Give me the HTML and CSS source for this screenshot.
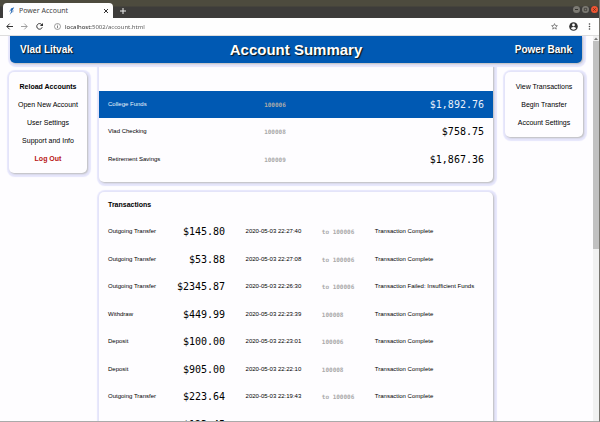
FILE: index.html
```html
<!DOCTYPE html>
<html lang="en">
<head>
<meta charset="utf-8">
<title>Power Account</title>
<link rel="stylesheet" href="styles.css">
</head>
<body>
<div class="window">
  <div class="titlebar">
    <div class="tab">
      <svg class="favicon" viewBox="0 0 8 10"><path d="M7 0 2.6 1.8 1.8 5 3.3 4.8 1 10 5.2 5.4 4 5.2Z" fill="#2468b4"/><path d="M2.2 3 .6 6.2M6 4 5 7" stroke="#6b8fc0" stroke-width=".7"/></svg>
      <span class="tab-title">Power Account</span>
      <button class="icon-button" aria-label="Close tab"><svg width="6" height="6" viewBox="0 0 6 6"><path d="m1 1 4 4M5 1 1 5" stroke="#333" stroke-width="1"/></svg></button>
    </div>
    <button class="icon-button new-tab" aria-label="New tab"><svg width="6" height="6" viewBox="0 0 6 6"><path d="M3 0v6M0 3h6" stroke="#eee" stroke-width="1"/></svg></button>
    <div class="controls">
      <button class="control" aria-label="Minimize"><svg viewBox="0 0 7 7"><path d="M2 3.5h3" stroke="#35342f"/></svg></button>
      <button class="control" aria-label="Maximize"><svg viewBox="0 0 7 7"><path d="M2.3 2.3h2.4v2.4H2.3z" fill="none" stroke="#35342f" stroke-width=".7"/></svg></button>
      <button class="control control-close" aria-label="Close"><svg viewBox="0 0 7 7"><path d="m2.2 2.2 2.6 2.6m0-2.6L2.2 4.8" stroke="#692817" stroke-width=".8"/></svg></button>
    </div>
  </div>
  <div class="toolbar">
    <button class="icon-button" aria-label="Back"><svg width="7" height="7" viewBox="0 0 7 7"><path d="M7 3.5H1M3.7.6.8 3.5l2.9 2.9" fill="none" stroke="#333" stroke-width="1"/></svg></button>
    <button class="icon-button" aria-label="Forward"><svg width="7" height="7" viewBox="0 0 7 7"><path d="M0 3.5h6M3.3.6l2.9 2.9-2.9 2.9" fill="none" stroke="#888" stroke-width=".8"/></svg></button>
    <button class="icon-button" aria-label="Reload"><svg width="7" height="7" viewBox="0 0 7 7"><path d="M5.8 1.7A2.8 2.8 0 1 0 6.2 4.3" fill="none" stroke="#333" stroke-width="1"/><path d="M7 0v3.1H3.9Z" fill="#333"/></svg></button>
    <div class="location">
      <svg width="7" height="7" viewBox="0 0 7 7"><circle cx="3.5" cy="3.5" r="3" fill="none" stroke="#777" stroke-width=".7"/><path d="M3.5 3v2.2M3.5 1.7v.8" stroke="#666" stroke-width=".8"/></svg>
      <input class="address" type="text" aria-label="Address" value="localhost:5002/account.html">
    </div>
    <button class="icon-button" aria-label="Bookmark"><svg width="7" height="7" viewBox="0 0 7 7"><path d="m3.5.6.8 1.9 2.1.2-1.6 1.4.5 2-1.8-1.1-1.8 1.1.5-2L.6 2.7l2.1-.2Z" fill="none" stroke="#444" stroke-width=".6"/></svg></button>
    <button class="icon-button profile" aria-label="Profile"><svg width="9" height="9" viewBox="0 0 9 9"><circle cx="4.5" cy="4.5" r="4.3" fill="#333"/><circle cx="4.5" cy="3" r="1.4" fill="#fff"/><path d="M1.9 6.3Q2.5 5 4.5 5t2.6 1.3Q6.3 7.7 4.5 7.7T1.9 6.3Z" fill="#fff"/></svg></button>
    <button class="icon-button" aria-label="Menu"><svg width="3" height="7" viewBox="0 0 3 7"><g fill="#444"><circle cx="1.5" cy="1" r=".8"/><circle cx="1.5" cy="3.5" r=".8"/><circle cx="1.5" cy="6" r=".8"/></g></svg></button>
  </div>
  <div class="viewport">
    <div class="page">
      <header class="header">
        <span class="customer">Vlad Litvak</span>
        <h1>Account Summary</h1>
        <span class="brand">Power Bank</span>
      </header>
      <div class="columns">
        <nav class="card menu">
          <a href="#" class="strong">Reload Accounts</a>
          <a href="#">Open New Account</a>
          <a href="#">User Settings</a>
          <a href="#">Support and Info</a>
          <a href="#" class="strong logout">Log Out</a>
        </nav>
        <main class="content">
          <section class="card accounts">
            <table class="account-table">
              <tr class="selected"><td>College Funds</td><td class="number">100006</td><td class="amount">$1,892.76</td></tr>
              <tr><td>Vlad Checking</td><td class="number">100008</td><td class="amount">$758.75</td></tr>
              <tr><td>Retirement Savings</td><td class="number">100009</td><td class="amount">$1,867.36</td></tr>
            </table>
          </section>
          <section class="card transactions">
            <h2>Transactions</h2>
            <table class="transaction-table">
              <tr><td>Outgoing Transfer</td><td class="amount">$145.80</td><td class="date">2020-05-03 22:27:40</td><td class="number">to 100006</td><td>Transaction Complete</td></tr>
              <tr><td>Outgoing Transfer</td><td class="amount">$53.88</td><td class="date">2020-05-03 22:27:08</td><td class="number">to 100006</td><td>Transaction Complete</td></tr>
              <tr><td>Outgoing Transfer</td><td class="amount">$2345.87</td><td class="date">2020-05-03 22:26:30</td><td class="number">to 100006</td><td>Transaction Failed: Insufficient Funds</td></tr>
              <tr><td>Withdraw</td><td class="amount">$449.99</td><td class="date">2020-05-03 22:23:39</td><td class="number">100008</td><td>Transaction Complete</td></tr>
              <tr><td>Deposit</td><td class="amount">$100.00</td><td class="date">2020-05-03 22:23:01</td><td class="number">100006</td><td>Transaction Complete</td></tr>
              <tr><td>Deposit</td><td class="amount">$905.00</td><td class="date">2020-05-03 22:22:10</td><td class="number">100008</td><td>Transaction Complete</td></tr>
              <tr><td>Outgoing Transfer</td><td class="amount">$223.64</td><td class="date">2020-05-03 22:19:43</td><td class="number">to 100006</td><td>Transaction Complete</td></tr>
              <tr><td></td><td class="amount">$123.45</td><td></td><td></td><td></td></tr>
            </table>
          </section>
        </main>
        <nav class="card menu">
          <a href="#">View Transactions</a>
          <a href="#">Begin Transfer</a>
          <a href="#">Account Settings</a>
        </nav>
      </div>
    </div>
    <div class="scrollbar"><svg width="6" height="5" viewBox="0 0 6 5"><path d="m1 4 2-2.5L5 4Z" fill="#777"/></svg><div class="thumb"></div></div>
  </div>
</div>
</body>
</html>
```
FILE: styles.css
```css
* { box-sizing: border-box; }
body {
  margin: 0;
  background: #fefdff;
  color: #000;
  font: 6px/9px "Liberation Sans", Arial, sans-serif;
}
button { padding: 0; border: 0; background: none; }
svg { display: block; flex: none; }
.window {
  display: flex;
  flex-direction: column;
  height: 100vh;
  overflow: hidden;
  border-right: 1px solid #77756f;
  border-bottom: 1px solid #aaa;
}

/* Browser chrome */
.titlebar {
  flex: none;
  display: flex;
  align-items: flex-end;
  height: 18px;
  padding-left: 3px;
  background: linear-gradient(#4d4b3e 0 6px, #3d3c3a 7px);
}
.tab {
  display: flex;
  align-items: center;
  gap: 4px;
  width: 110px;
  height: 15px;
  padding: 0 4px 0 6px;
  border-radius: 4px 4px 0 0;
  background: #fefefe;
}
.favicon { width: 6px; height: 8px; }
.tab-title {
  flex: 1;
  color: #444;
  font: 7px/9px "Noto Sans", sans-serif;
}
.new-tab { margin: 0 0 4px 7px; }
.controls { display: flex; gap: 2px; margin: 0 1px 5px auto; }
.control {
  width: 7px;
  height: 7px;
  border-radius: 50%;
  background: #7c7a73;
}
.control svg { width: 7px; height: 7px; }
.control-close { background: #ee5532; }
.toolbar {
  flex: none;
  display: flex;
  align-items: center;
  gap: 8px;
  height: 18px;
  padding: 0 8px 0 6px;
  border-bottom: 1px solid #ddd;
  background: #fefefe;
}
.location {
  flex: 1;
  display: flex;
  align-items: center;
  gap: 4px;
  padding-left: 3px;
}
.address {
  flex: 1;
  min-width: 0;
  height: 10px;
  padding: 0;
  border: 0;
  background: linear-gradient(90deg, #222 27px, #555 27px) text;
  -webkit-text-fill-color: transparent;
  font: 6px/10px "Noto Sans", sans-serif;
}
.profile { margin: 0 2px 0 3px; }

/* Page */
.viewport { flex: 1; display: flex; min-height: 0; }
.page {
  flex: 1;
  min-width: 0;
  overflow: hidden;
  padding: 0 10px 0 9px;
}
.header {
  position: relative;
  z-index: 1;
  display: grid;
  grid-template-columns: 1fr auto 1fr;
  align-items: center;
  height: 27px;
  margin: 0 1px;
  padding: 0 10px;
  border-radius: 0 0 5px 5px;
  background: #0059b3;
  box-shadow: 1px 1px 2px #bbb, 1px 1px 1px 3px #e6e6fc;
  color: #fff;
  font-size: 10px;
  font-weight: bold;
  text-shadow: 1px 1px 1px #111;
}
h1 { margin: 0; font-size: 15px; line-height: 18px; }
.brand { text-align: right; }
.columns {
  display: grid;
  grid-template-columns: 78px minmax(0, 1fr) 78px;
  align-items: start;
  gap: 12px;
}
.card {
  border-radius: 5px;
  background: #fefdff;
  box-shadow: 1px 1px 2px #bbb, 1px 1px 1px 3px #e6e6fc;
}
.menu {
  display: flex;
  flex-direction: column;
  align-items: center;
  gap: 9px;
  margin-top: 9px;
  padding: 10px 0;
  font-size: 7px;
}
.menu a { color: inherit; text-decoration: none; white-space: nowrap; }
.menu .strong { font-weight: bold; }
.menu .logout { color: #b81414; }
.accounts { padding: 28px 0 9px; border-radius: 0 0 5px 5px; }
.transactions { margin-top: 10px; padding: 8px 0; }
h2 { margin: 0 9px 9px; font-size: 7px; line-height: 9px; }
table { width: 100%; border-collapse: collapse; table-layout: fixed; }
td { padding: 0; white-space: nowrap; }
td:first-child { padding-left: 9px; }
.account-table { height: 82px; }
.account-table td:last-child { padding-right: 9px; }
.transaction-table { height: 220px; }
.transaction-table td:nth-child(1) { width: 19%; }
.transaction-table td:nth-child(2) { width: 13%; }
.transaction-table td:nth-child(3) { width: 21%; padding-left: 14px; text-align: center; }
.transaction-table td:nth-child(4) { width: 17%; padding-left: 14px; }
.transaction-table td:nth-child(5) { width: 30%; }
.number {
  color: #aaa;
  font-family: "DejaVu Sans Mono", monospace;
  font-weight: bold;
}
.account-table .number { text-align: center; padding-right: 42px; }
.amount {
  font-family: "DejaVu Sans Mono", monospace;
  font-size: 10px;
  text-align: right;
}
.selected { background: #0059b3; color: #e8f0fa; }
.scrollbar { flex: none; width: 6px; background: #f1f1f1; }
.thumb { height: 54%; background: #c1c1c1; }
```
